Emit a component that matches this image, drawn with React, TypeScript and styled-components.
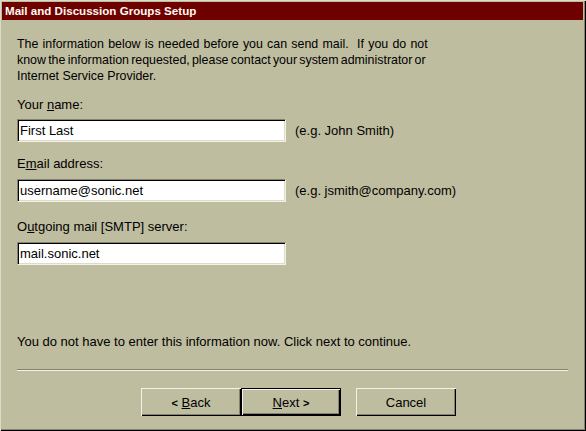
import React from 'react';
import styled, { createGlobalStyle } from 'styled-components';

const face = '#bfbd9f';
const shadow = '#85836d';
const highlight = '#f4f2e6';

const GlobalStyle = createGlobalStyle`
	html, body {
		margin: 0;
		padding: 0;
		background: ${face};
	}
	body {
		font-family: 'Liberation Sans', Arial, sans-serif;
		font-size: 13px;
		color: #000;
	}
`;

const Window = styled.div`
	box-sizing: border-box;
	width: 586px;
	height: 431px;
	padding: 2px 3px 2px 2px;
	background: ${face};
	box-shadow: inset 1px 1px 0 #dcdac8, inset -1px -1px 0 #000, inset -2px -2px 0 ${shadow};
	display: flex;
	flex-direction: column;
`;

const TitleBar = styled.div`
	height: 18px;
	background: #6f0000;
	color: #fffbf0;
	font-weight: bold;
	font-size: 11.6px;
	line-height: 18px;
	padding-left: 3px;
	white-space: nowrap;
`;

const Body = styled.div`
	padding: 0 15px 0 15px;
	display: flex;
	flex-direction: column;
`;

const Text = styled.p<{ $top: number }>`
	margin: ${(p) => p.$top}px 0 0 0;
	line-height: 16px;
	white-space: nowrap;
`;

const Intro = styled(Text)`
	font-size: 12.4px;
`;

const IntroLine = styled.span<{ $wordSpacing?: number }>`
	display: block;
	word-spacing: ${(p) => p.$wordSpacing ?? 0}px;
`;

const Row = styled.div<{ $top: number }>`
	margin-top: ${(p) => p.$top}px;
	display: flex;
	align-items: center;
	gap: 9px;
`;

const Field = styled.div`
	box-sizing: border-box;
	width: 269px;
	height: 23px;
	background: #fff;
	border-style: solid;
	border-width: 1px;
	border-color: ${shadow} ${highlight} ${highlight} ${shadow};
	box-shadow: inset 1px 1px 0 #000, inset -1px -1px 0 #dedbc9;
	padding: 0 3px 0 2px;
	line-height: 21px;
	white-space: nowrap;
`;

const Hint = styled.span`
	white-space: nowrap;
`;

const Separator = styled.div`
	margin-top: 19px;
	height: 1px;
	width: 551px;
	background: ${shadow};
	border-bottom: 1px solid ${highlight};
`;

const Buttons = styled.div`
	margin-top: 17px;
	padding-left: 124px;
	display: flex;
`;

const Button = styled.button<{ $default?: boolean; $gap?: number }>`
	box-sizing: border-box;
	width: 100px;
	height: 28px;
	margin-left: ${(p) => p.$gap ?? 0}px;
	padding: 0;
	font-family: inherit;
	font-size: 13px;
	color: #000;
	background: ${face};
	border: ${(p) => (p.$default ? '1px solid #000' : 'none')};
	box-shadow: inset 1px 1px 0 ${highlight}, inset -1px -1px 0 #000, inset -2px -2px 0 ${shadow};
	cursor: pointer;
`;

const Arrow = styled.span`
	font-weight: bold;
	font-size: 11px;
`;

export default function App() {
	return (
		<>
			<GlobalStyle />
			<Window>
				<TitleBar>Mail and Discussion Groups Setup</TitleBar>
				<Body>
					<Intro $top={16}>
						<IntroLine $wordSpacing={0.8}>
							The information below is needed before you can send mail.&nbsp; If you do not
						</IntroLine>
						<IntroLine $wordSpacing={-1.2}>
							know the information requested, please contact your system administrator or
						</IntroLine>
						<IntroLine>Internet Service Provider.</IntroLine>
					</Intro>

					<Text $top={13}>
						Your <u>n</u>ame:
					</Text>
					<Row $top={6}>
						<Field>First Last</Field>
						<Hint>(e.g. John Smith)</Hint>
					</Row>

					<Text $top={14}>
						E<u>m</u>ail address:
					</Text>
					<Row $top={7}>
						<Field>username@sonic.net</Field>
						<Hint>(e.g. jsmith@company.com)</Hint>
					</Row>

					<Text $top={17}>
						O<u>u</u>tgoing mail [SMTP] server:
					</Text>
					<Row $top={7}>
						<Field>mail.sonic.net</Field>
					</Row>

					<Text $top={69}>You do not have to enter this information now. Click next to continue.</Text>

					<Separator />

					<Buttons>
						<Button>
							<Arrow>&lt;</Arrow> <u>B</u>ack
						</Button>
						<Button $default>
							<u>N</u>ext <Arrow>&gt;</Arrow>
						</Button>
						<Button $gap={15}>Cancel</Button>
					</Buttons>
				</Body>
			</Window>
		</>
	);
}
